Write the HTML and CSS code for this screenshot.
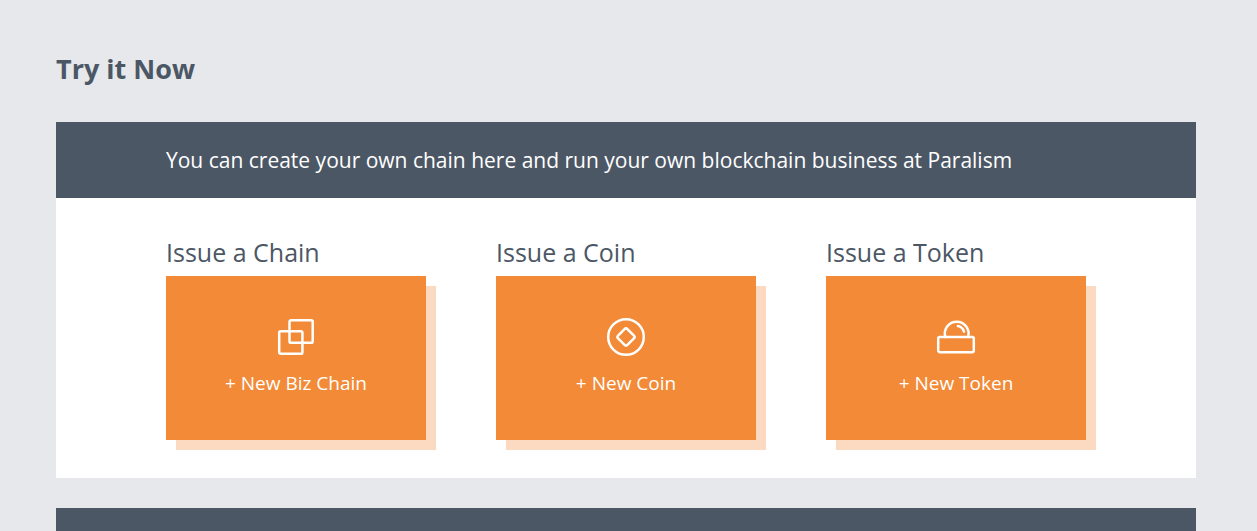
FILE: index.html
```html
<!DOCTYPE html>
<html lang="en">
<head>
<meta charset="utf-8">
<meta name="viewport" content="width=device-width, initial-scale=1">
<title>Try it Now</title>
<link rel="stylesheet" href="styles.css">
</head>
<body>
<main class="page">
  <h1 class="page-title">Try it Now</h1>
  <section class="panel">
    <p class="panel-header">You can create your own chain here and run your own blockchain business at Paralism</p>
    <div class="cards">
      <article class="card">
        <h2 class="card-title">Issue a Chain</h2>
        <button class="tile" type="button">
          <svg class="icon" viewBox="0 0 40 40" aria-hidden="true">
            <rect x="3.2" y="14.2" width="23.2" height="22.6" rx="1.6"/>
            <rect x="13.5" y="3.2" width="23.2" height="22.6" rx="1.6"/>
          </svg>
          <span>+ New Biz Chain</span>
        </button>
      </article>
      <article class="card">
        <h2 class="card-title">Issue a Coin</h2>
        <button class="tile" type="button">
          <svg class="icon" viewBox="0 0 40 40" aria-hidden="true">
            <circle cx="20" cy="20" r="17.8"/>
            <rect x="13.4" y="13.4" width="13.2" height="13.2" rx="2" transform="rotate(45 20 20)"/>
          </svg>
          <span>+ New Coin</span>
        </button>
      </article>
      <article class="card">
        <h2 class="card-title">Issue a Token</h2>
        <button class="tile" type="button">
          <svg class="icon" viewBox="0 0 40 40" aria-hidden="true">
            <rect x="2.2" y="20" width="35.6" height="15.2" rx="1.6"/>
            <path d="M9.300 20A11.900 11.900 0 1 1 32.100 20"/>
            <path d="M21.800 9Q26.600 10 28 14.600"/>
          </svg>
          <span>+ New Token</span>
        </button>
      </article>
    </div>
  </section>
  <section class="next-panel"></section>
</main>
</body>
</html>
```

FILE: styles.css
```css
* {
  box-sizing: border-box;
}

body {
  margin: 0;
  background: #e6e8eb;
  color: #4c5765;
  font-family: "Open Sans", "Noto Sans", sans-serif;
}

.page {
  display: flex;
  flex-direction: column;
  min-height: 100vh;
  padding: 49px 61px 0 56px;
}

.page-title {
  margin: 0 0 33px;
  font-size: 27px;
  font-weight: 700;
  line-height: 40px;
}

.panel {
  margin-bottom: 30px;
  background: #fff;
}

.panel-header {
  margin: 0;
  padding: 22px 110px;
  background: #4c5765;
  color: #fff;
  font-size: 21px;
  line-height: 32px;
}

.cards {
  display: grid;
  grid-template-columns: repeat(3, 1fr);
  gap: 70px;
  padding: 36px 110px 38px;
}

.card-title {
  margin: 0 0 6px;
  font-size: 25px;
  font-weight: 400;
  line-height: 36px;
}

.tile {
  display: flex;
  flex-direction: column;
  align-items: center;
  gap: 12px;
  width: 100%;
  padding: 41px 20px 43px;
  border: 0;
  background: #f28a37;
  box-shadow: 10px 10px 0 #fbdac1;
  color: #fff;
  font-family: inherit;
  font-size: 19px;
  line-height: 28px;
  cursor: pointer;
}

.icon {
  width: 40px;
  height: 40px;
  fill: none;
  stroke: #fff;
  stroke-width: 2.5;
  stroke-linecap: round;
  stroke-linejoin: round;
}

.next-panel {
  flex: 1;
  min-height: 23px;
  background: #4c5765;
}
```
